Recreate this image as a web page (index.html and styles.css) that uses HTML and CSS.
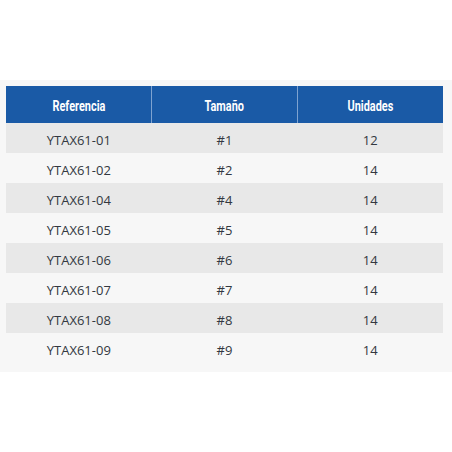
FILE: index.html
```html
<!DOCTYPE html>
<html>
<head>
<meta charset="utf-8">
<link rel="stylesheet" href="styles.css">
</head>
<body>
<div class="panel">
<table class="tbl">
<thead>
<tr><th><span class="hd">Referencia</span></th><th><span class="hd">Tamaño</span></th><th><span class="hd">Unidades</span></th></tr>
</thead>
<tbody>
<tr class="odd"><td>YTAX61-01</td><td>#1</td><td>12</td></tr>
<tr><td>YTAX61-02</td><td>#2</td><td>14</td></tr>
<tr class="odd"><td>YTAX61-04</td><td>#4</td><td>14</td></tr>
<tr><td>YTAX61-05</td><td>#5</td><td>14</td></tr>
<tr class="odd"><td>YTAX61-06</td><td>#6</td><td>14</td></tr>
<tr><td>YTAX61-07</td><td>#7</td><td>14</td></tr>
<tr class="odd"><td>YTAX61-08</td><td>#8</td><td>14</td></tr>
<tr><td>YTAX61-09</td><td>#9</td><td>14</td></tr>
</tbody>
</table>
</div>
</body>
</html>
```
FILE: styles.css
```css
html, body {
  margin: 0;
  padding: 0;
  background: #ffffff;
}
body {
  padding-top: 80px;
}
.panel {
  background: #f7f7f7;
  padding: 6px 9px 6px 6px;
  height: 280px;
}
.tbl {
  width: 437px;
  border-collapse: collapse;
  table-layout: fixed;
  font-family: "Open Sans", sans-serif;
}
.tbl th {
  background: #1a5aa6;
  color: #ffffff;
  height: 37px;
  padding: 0;
  border-left: 1px solid #7fa3d0;
  border-right: 1px solid #7fa3d0;
}
.tbl th:first-child { border-left: none; }
.tbl th:last-child { border-right: none; }
.hd {
  display: inline-block;
  font-family: Roboto, sans-serif;
  font-weight: bold;
  font-size: 14px;
  transform: scaleX(0.78);
  letter-spacing: 0;
}
.tbl td {
  height: 30px;
  padding: 3px 0 0 0;
  box-sizing: border-box;
  text-align: center;
  font-size: 13px;
  color: #333840;
}
.tbl tr.odd td {
  background: #e8e8e8;
}
```
